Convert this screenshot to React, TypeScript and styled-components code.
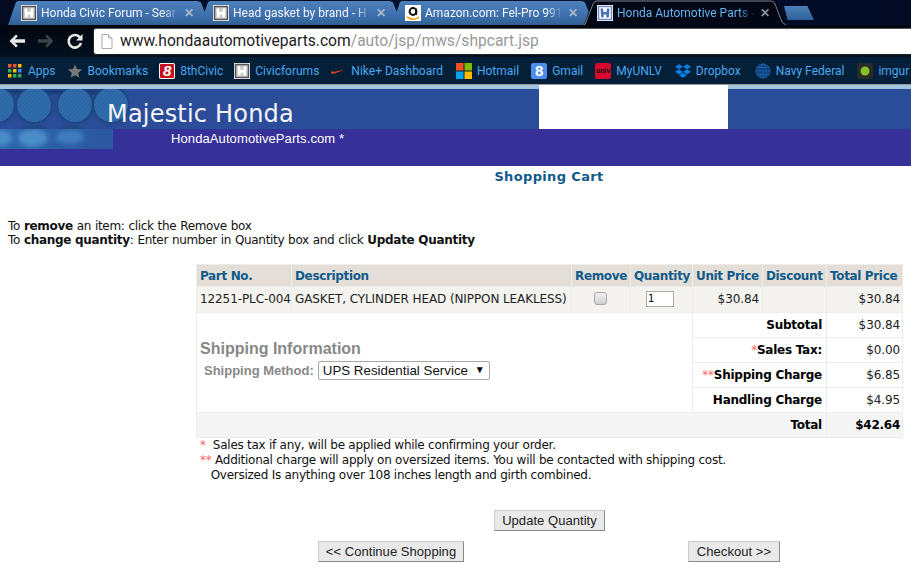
import React from "react";
import styled, { createGlobalStyle } from "styled-components";
import { FaDropbox } from "react-icons/fa";

const Global = createGlobalStyle`
  html, body { margin: 0; padding: 0; background: #fff; overflow: hidden; }
  #root { width: 911px; height: 578px; overflow: hidden; }
`;

const Page = styled.div`
  width: 911px;
  height: 578px;
  display: flex;
  flex-direction: column;
  font-family: "DejaVu Sans", Verdana, sans-serif;
  color: #111;
`;

/* ---- browser chrome ---- */
const Chrome = styled.div`
  height: 84px;
  background: linear-gradient(90deg, #020b22 0%, #03122e 60%, #020a24 100%);
  display: flex;
  flex-direction: column;
  font-family: Roboto, "Noto Sans", sans-serif;
`;
const TabStrip = styled.div`
  height: 25px;
  padding: 1px 0 0 8px;
  box-sizing: border-box;
  display: flex;
  align-items: stretch;
`;
const Tab = styled.div<{ $active?: boolean }>`
  width: 204px;
  margin-right: -12px;
  height: 24px;
  box-sizing: border-box;
  padding: 4px 0 0 13px;
  display: flex;
  gap: 4px;
  clip-path: polygon(0 100%, 8px 4%, 10px 0, calc(100% - 14px) 0, calc(100% - 11px) 6%, calc(100% - 2px) 100%);
  background: ${(p) => (p.$active ? "#020716" : "linear-gradient(#4d80bb, #3a6da9 70%, #30608f)")};
  position: relative;
  z-index: ${(p) => (p.$active ? 2 : 1)};
`;
const TabOutline = styled.svg`
  position: absolute;
  left: 584px;
  top: 0;
  z-index: 3;
`;
const TabTitle = styled.span<{ $active?: boolean }>`
  width: 138px;
  height: 17px;
  overflow: hidden;
  white-space: nowrap;
  font-size: 12px;
  line-height: 17px;
  color: ${(p) => (p.$active ? "#62b4f0" : "#f2f6fa")};
  -webkit-mask-image: linear-gradient(90deg, #000 88%, transparent 100%);
  mask-image: linear-gradient(90deg, #000 88%, transparent 100%);
`;
const TabClose = styled.span<{ $active?: boolean }>`
  margin-left: 1px;
  font-size: 12px;
  font-weight: 700;
  line-height: 17px;
  color: ${(p) => (p.$active ? "#8d9299" : "#a9b9cc")};
`;
const NewTab = styled.div`
  width: 30px;
  height: 14px;
  margin: 5px 0 0 8px;
  background: linear-gradient(#4d80bb, #2f5f97);
  clip-path: polygon(0 0, 78% 0, 100% 100%, 12% 100%);
`;
const Favicon = styled.span`
  width: 16px;
  height: 16px;
  flex: none;
  background: #fff;
  display: block;
  line-height: 0;
`;
const Toolbar = styled.div`
  height: 32px;
  display: flex;
  align-items: center;
  box-sizing: border-box;
  padding: 0 0 0 8px;
  background: linear-gradient(#01060f, #02101e);
`;
const NavIcon = styled.svg`
  flex: none;
  margin-right: 11px;
`;
const Omnibox = styled.div`
  flex: 1;
  height: 27px;
  margin-left: -2px;
  box-sizing: border-box;
  background: #fff;
  border: 1px solid #222;
  border-right: 0;
  border-top-color: #555;
  border-radius: 3px 0 0 3px;
  display: flex;
  align-items: center;
  padding-left: 7px;
  gap: 7px;
  font-size: 15.6px;
`;
const Url = styled.span`
  color: #999;
  white-space: nowrap;
  & b { color: #222; font-weight: 400; }
`;
const Bookmarks = styled.div`
  height: 27px;
  background: #041f38;
  display: flex;
  align-items: center;
  box-sizing: border-box;
  padding: 0 0 0 7px;
  font-size: 12px;
  white-space: nowrap;
  overflow: hidden;
`;
const Mark = styled.span<{ $gap?: number }>`
  display: flex;
  align-items: center;
  gap: 5px;
  color: #4aa8ee;
  margin-right: ${(p) => p.$gap ?? 12}px;
`;
const Glyph = styled.span<{ $bg: string; $fg?: string; $size?: number; $italic?: boolean; $ring?: boolean }>`
  width: 16px;
  height: 16px;
  flex: none;
  background: ${(p) => p.$bg};
  color: ${(p) => p.$fg ?? "#fff"};
  font: ${(p) => (p.$italic ? "italic" : "normal")} 700 ${(p) => p.$size ?? 13}px/16px "Liberation Sans", sans-serif;
  text-align: center;
  border-radius: 2px;
  overflow: hidden;
  ${(p) => (p.$ring ? "box-shadow: inset 0 0 0 1px #fff;" : "")}
`;

/* ---- site banner ---- */
const Banner = styled.div`
  position: relative;
  height: 82px;
  flex: none;
  display: flex;
  flex-direction: column;
`;
const BannerTop = styled.div`
  height: 45px;
  display: flex;
  border-top: 1px solid #999;
  box-sizing: border-box;
`;
const BannerBlue = styled.div<{ $w?: number }>`
  ${(p) => (p.$w ? `width:${p.$w}px;` : "flex:1;")}
  box-sizing: border-box;
  background: #2b4c99;
  border-top: 4px solid #a3c4de;
  padding-left: 107px;
`;
const BannerWhite = styled.div`
  width: 189px;
  background: #fff;
`;
const SiteName = styled.div`
  position: relative;
  z-index: 1;
  color: #f4f6fa;
  font-size: 24px;
  line-height: 28px;
  letter-spacing: 0.2px;
  margin-top: 11px;
  white-space: nowrap;
`;
const BannerBottom = styled.div`
  flex: 1;
  background: #363099;
  padding: 2px 0 0 171px;
  color: #fff;
  font: 13px/16px "Liberation Sans", Arial, sans-serif;
  letter-spacing: 0.1px;
  position: relative;
  z-index: 1;
`;
const BannerArt = styled.svg`
  position: absolute;
  left: 0;
  top: 5px;
  z-index: 0;
`;
const ArtLow = styled.svg`
  position: absolute;
  left: 0;
  top: 45px;
  z-index: 2;
`;

/* ---- content ---- */
const Title = styled.h1`
  margin: 3px 0 0;
  font-size: 13px;
  line-height: 16px;
  font-weight: 700;
  color: #0f5a8a;
  text-align: center;
  padding-left: 187px;
  letter-spacing: 0.35px;
`;
const Help = styled.div`
  margin: 34px 0 0 8px;
  font-size: 12px;
  line-height: 14px;
  letter-spacing: -0.32px;
  word-spacing: 0.4px;
  & b { letter-spacing: -0.3px; word-spacing: 0; }
`;
const Cart = styled.table`
  margin: 17px 0 0 196px;
  width: 706px;
  border-collapse: collapse;
  table-layout: fixed;
  font-size: 12px;
`;
const Th = styled.th`
  height: 21px;
  padding: 0 3px;
  background: #e3dfd8;
  color: #0f5a8a;
  font-size: 12px;
  font-weight: 700;
  text-align: left;
  border: 1px solid #efedea;
  white-space: nowrap;
  letter-spacing: -0.35px;
`;
const Td = styled.td<{ $align?: string; $bg?: string; $strong?: boolean; $lift?: boolean }>`
  height: ${(p) => (p.$lift ? 23 : 24)}px;
  padding: 0 ${(p) => (p.$strong ? 4 : 3)}px ${(p) => (p.$lift ? 2 : 0)}px 3px;
  background: ${(p) => p.$bg ?? "#fff"};
  text-align: ${(p) => p.$align ?? "left"};
  border: 1px solid #efedea;
  white-space: nowrap;
  color: ${(p) => (p.$strong ? "#000" : "#222")};
  font-weight: ${(p) => (p.$strong ? 700 : 400)};
  font-size: 12px;
  letter-spacing: ${(p) => (p.$strong ? "-0.25px" : "-0.1px")};
  &:last-child { padding-right: 2px; }
`;
const ShipCell = styled.td`
  padding: 26px 0 0 3px;
  vertical-align: top;
  border: 1px solid #efedea;
  font-family: "Liberation Sans", Arial, sans-serif;
`;
const ShipTitle = styled.div`
  font-size: 16px;
  line-height: 20px;
  font-weight: 700;
  color: #888;
`;
const ShipRow = styled.div`
  display: flex;
  align-items: center;
  gap: 4px;
  margin: 2px 0 0 4px;
  font-size: 13px;
  font-weight: 700;
  color: #888;
`;
const SelectWrap = styled.span`
  position: relative;
  display: block;
  line-height: 0;
`;
const Select = styled.select`
  appearance: none;
  width: 172px;
  height: 19px;
  padding: 0 0 0 4px;
  box-sizing: border-box;
  background: #fff;
  border: 1px solid #a9a9a9;
  border-radius: 2px;
  color: #111;
  font: 13.33px "Liberation Sans", Arial, sans-serif;
`;
const Arrow = styled.span`
  position: absolute;
  right: 5px;
  top: 4px;
  font-size: 10px;
  line-height: 10px;
  color: #000;
  pointer-events: none;
`;
const Check = styled.input`
  appearance: none;
  display: block;
  margin: 0 0 0 19px;
  width: 13px;
  height: 13px;
  border: 1px solid #a9a9a9;
  border-radius: 3px;
  background: linear-gradient(#f2f2f2, #d0d0d0);
`;
const Qty = styled.input`
  display: block;
  margin: 0 0 0 12px;
  width: 28px;
  height: 16px;
  box-sizing: border-box;
  padding: 0 0 0 1px;
  border: 1px solid #aaa;
  font: 10px "DejaVu Sans Mono", monospace;
  color: #000;
`;
const Star = styled.span`
  color: #f66;
  font-weight: 400;
`;
const Notes = styled.div`
  margin: 0 0 0 200px;
  font-size: 12px;
  line-height: 15px;
  letter-spacing: -0.26px;
  white-space: pre;
`;
const Actions = styled.div`
  margin-top: 27px;
  display: flex;
  flex-direction: column;
  gap: 10px;
  font-family: "Liberation Sans", Arial, sans-serif;
`;
const ActionRow = styled.div<{ $pad: number; $gap?: number }>`
  display: flex;
  padding-left: ${(p) => p.$pad}px;
  gap: ${(p) => p.$gap ?? 0}px;
`;
const Button = styled.button<{ $w: number }>`
  width: ${(p) => p.$w}px;
  height: 21px;
  padding: 0;
  box-sizing: border-box;
  background: #e9e9e9;
  border: 1px solid;
  border-color: #ccc #888 #888 #ccc;
  color: #222;
  font: 13px/18px "Liberation Sans", Arial, sans-serif;
  letter-spacing: 0.05px;
`;

const Honda = ({ blue }: { blue?: boolean }) => (
  <Favicon>
    <svg width="16" height="16" viewBox="0 0 16 16">
      <rect x="1.500" y="1.500" width="13" height="13" fill={blue ? "#fff" : "#c9c9c9"} stroke={blue ? "#6f8fc4" : "#555"} strokeWidth="1.500" />
      <path d="M3.500 3.500h2.500l.5 3.500h3l.5-3.500h2.500l-.7 9h-2.300l-.3-3h-2.400l-.3 3H4.200z" fill={blue ? "#4f75b4" : "#fff"} />
    </svg>
  </Favicon>
);

const tabs = ["Honda Civic Forum - Sear", "Head gasket by brand - H", "Amazon.com: Fel-Pro 991", "Honda Automotive Parts -"];

const App = () => (
  <Page>
    <Global />
    <Chrome>
      <TabStrip>
        {tabs.map((t, i) => (
          <Tab key={t} $active={i === 3}>
            {i === 2 ? (
              <Favicon>
                <svg width="16" height="16" viewBox="0 0 16 16">
                  <rect width="16" height="16" rx="2" fill="#fff" />
                  <circle cx="8" cy="6.500" r="3.400" fill="none" stroke="#111" strokeWidth="2" />
                  <path d="M11 3.500v6.500" stroke="#111" strokeWidth="2" />
                  <path d="M2 12c4 3 9 3 12 0" fill="none" stroke="#f90" strokeWidth="1.600" />
                </svg>
              </Favicon>
            ) : (
              <Honda blue={i === 3} />
            )}
            <TabTitle $active={i === 3}>{t}</TabTitle>
            <TabClose $active={i === 3}>✕</TabClose>
          </Tab>
        ))}
        <NewTab />
      </TabStrip>
      <TabOutline width="204" height="25" viewBox="0 0 204 25">
        <path d="M0 24.500h1L9 4q1-3 4-3h174q3 0 4 3l7 18q1 2 4 2.500" fill="none" stroke="#7a7d80" strokeWidth="1" />
      </TabOutline>
      <Toolbar>
        <NavIcon width="18" height="18" viewBox="0 0 18 18">
          <path d="M1.500 9l6.500-6.500 1.800 1.800-3 3H17v3.400H6.800l3 3L8 15.500z" fill="#e8e8e8" />
        </NavIcon>
        <NavIcon width="18" height="18" viewBox="0 0 18 18">
          <path d="M16.500 9L10 2.500 8.200 4.300l3 3H1v3.400h10.200l-3 3L10 15.500z" fill="#3d4348" />
        </NavIcon>
        <NavIcon width="18" height="18" viewBox="0 0 18 18">
          <path d="M14 5.500A6.300 6.300 0 1 0 15 11" fill="none" stroke="#e8e8e8" strokeWidth="2.600" />
          <path d="M16.500 2v6.500H10z" fill="#e8e8e8" />
        </NavIcon>
        <Omnibox>
          <svg width="12" height="15" viewBox="0 0 12 15">
            <path d="M1 .5h6.500L11 4v10.500H1z" fill="#fff" stroke="#aaa" />
            <path d="M7.500.5V4H11" fill="#eee" stroke="#aaa" />
          </svg>
          <Url>
            <b>www.hondaautomotiveparts.com</b>/auto/jsp/mws/shpcart.jsp
          </Url>
        </Omnibox>
      </Toolbar>
      <Bookmarks>
        <Mark $gap={11}>
          <svg width="16" height="16" viewBox="0 0 16 16">
            {[0, 1, 2].flatMap((r) =>
              [0, 1, 2].map((c) => (
                <rect key={`${r}${c}`} x={1 + c * 5} y={1 + r * 5} width="3.500" height="3.500"
                  fill={["#e53", "#e53", "#fb0", "#3a5", "#fb0", "#48e", "#fb0", "#3a5", "#3a5"][r * 3 + c]} />
              ))
            )}
          </svg>
          Apps
        </Mark>
        <Mark $gap={11}>
          <svg width="16" height="16" viewBox="0 0 16 16">
            <path d="M8 1.500l2 4.600 5 .5-3.800 3.300 1.200 4.900L8 12.200l-4.400 2.600 1.200-4.900L1 6.600l5-.5z" fill="#777" />
          </svg>
          Bookmarks
        </Mark>
        <Mark $gap={11}>
          <Glyph $bg="#c8101c" $italic $ring $size={15}>8</Glyph>
          8thCivic
        </Mark>
        <Mark $gap={11}>
          <Honda />
          Civicforums
        </Mark>
        <Mark $gap={13}>
          <svg width="16" height="16" viewBox="0 0 16 16">
            <path d="M1 9.500c0 1.500 2 1.500 3.500 1L15 6.500 5.500 8.500c-2 .5-3 .3-3-.5z" fill="#e2421c" />
          </svg>
          Nike+ Dashboard
        </Mark>
        <Mark>
          <svg width="16" height="16" viewBox="0 0 16 16">
            <rect width="7.500" height="7.500" fill="#f25022" />
            <rect x="8.500" width="7.500" height="7.500" fill="#7fba00" />
            <rect y="8.500" width="7.500" height="7.500" fill="#00a4ef" />
            <rect x="8.500" y="8.500" width="7.500" height="7.500" fill="#ffb900" />
          </svg>
          Hotmail
        </Mark>
        <Mark>
          <Glyph $bg="#4f8cf0" $size={15}>8</Glyph>
          Gmail
        </Mark>
        <Mark $gap={13}>
          <Glyph $bg="#d8092e" $fg="#111" $size={7}>unlv</Glyph>
          MyUNLV
        </Mark>
        <Mark $gap={14}>
          <FaDropbox size={16} color="#0a7ee0" />
          Dropbox
        </Mark>
        <Mark $gap={13}>
          <svg width="16" height="16" viewBox="0 0 16 16" fill="none" stroke="#1a5fa8" strokeWidth="1">
            <circle cx="8" cy="8" r="7" fill="#0c3a70" />
            <ellipse cx="8" cy="8" rx="3.200" ry="7" />
            <path d="M1 8h14M2 4.500h12M2 11.500h12M8 1v14" />
          </svg>
          Navy Federal
        </Mark>
        <Mark>
          <Glyph $bg="#2a2a2a">
            <svg width="16" height="16" viewBox="0 0 16 16" style={{ display: "block" }}>
              <circle cx="8" cy="8" r="4.500" fill="#85bf25" />
            </svg>
          </Glyph>
          imgur
        </Mark>
      </Bookmarks>
    </Chrome>

    <Banner>
      <BannerArt width="130" height="40" viewBox="0 0 130 40">
        <defs>
          <pattern id="hatch" width="3" height="3" patternUnits="userSpaceOnUse" patternTransform="rotate(45)">
            <rect width="3" height="3" fill="#2c66a4" />
            <rect width="1" height="3" fill="#326fae" />
          </pattern>
          <filter id="halo"><feGaussianBlur stdDeviation="1.500" /></filter>
        </defs>
        <rect y="0" width="122" height="5" fill="#163a72" filter="url(#halo)" />
        {[-3, 34, 75, 111].map((x) => (
          <g key={x}>
            <circle cx={x} cy="16" r="19" fill="#1b457f" filter="url(#halo)" />
            <circle cx={x} cy="16" r="17" fill="url(#hatch)" />
          </g>
        ))}
        <ellipse cx="34" cy="41" rx="14" ry="5" fill="#1f4a85" />
        <ellipse cx="72" cy="41" rx="13" ry="5" fill="#1f4a85" />
      </BannerArt>
      <BannerTop>
        <BannerBlue $w={539}>
          <SiteName>Majestic Honda</SiteName>
        </BannerBlue>
        <BannerWhite />
        <BannerBlue />
      </BannerTop>
      <BannerBottom>HondaAutomotiveParts.com *</BannerBottom>
      <ArtLow width="113" height="20" viewBox="0 0 113 20">
        <defs>
          <linearGradient id="lowFade" x1="0" x2="1" y1="0" y2="0">
            <stop offset="0" stopColor="#2a66ac" />
            <stop offset="1" stopColor="#2c56a0" />
          </linearGradient>
          <filter id="soft"><feGaussianBlur stdDeviation="2.500" /></filter>
        </defs>
        <rect width="113" height="20" fill="url(#lowFade)" />
        <g filter="url(#soft)">
          <ellipse cx="0" cy="9" rx="12" ry="8" fill="#4c8dc9" />
          <ellipse cx="33" cy="9" rx="15" ry="9" fill="#4c8dc9" />
          <ellipse cx="70" cy="8" rx="14" ry="7" fill="#3f7dbd" />
        </g>
      </ArtLow>
    </Banner>

    <Title>Shopping Cart</Title>
    <Help>
      <div>To <b>remove</b> an item: click the Remove box</div>
      <div>To <b>change quantity</b>: Enter number in Quantity box and click <b>Update Quantity</b></div>
    </Help>

    <Cart>
      <colgroup>
        <col style={{ width: 95 }} />
        <col style={{ width: 280 }} />
        <col style={{ width: 59 }} />
        <col style={{ width: 62 }} />
        <col style={{ width: 70 }} />
        <col style={{ width: 64 }} />
        <col style={{ width: 76 }} />
      </colgroup>
      <thead>
        <tr>
          <Th>Part No.</Th>
          <Th>Description</Th>
          <Th>Remove</Th>
          <Th>Quantity</Th>
          <Th>Unit Price</Th>
          <Th>Discount</Th>
          <Th>Total Price</Th>
        </tr>
      </thead>
      <tbody>
        <tr>
          <Td $bg="#f4f3f0" $lift>12251-PLC-004</Td>
          <Td $bg="#f4f3f0" $lift>GASKET, CYLINDER HEAD (NIPPON LEAKLESS)</Td>
          <Td $bg="#f4f3f0" $lift><Check type="checkbox" readOnly /></Td>
          <Td $bg="#f4f3f0" $lift><Qty defaultValue="1" /></Td>
          <Td $bg="#f4f3f0" $lift $align="right">$30.84</Td>
          <Td $bg="#f4f3f0" $lift />
          <Td $bg="#f4f3f0" $lift $align="right">$30.84</Td>
        </tr>
        <tr>
          <ShipCell colSpan={4} rowSpan={4}>
            <ShipTitle>Shipping Information</ShipTitle>
            <ShipRow>
              Shipping Method:
              <SelectWrap>
                <Select defaultValue="ups">
                  <option value="ups">UPS Residential Service</option>
                </Select>
                <Arrow>▼</Arrow>
              </SelectWrap>
            </ShipRow>
          </ShipCell>
          <Td colSpan={2} $align="right" $strong>Subtotal</Td>
          <Td $align="right">$30.84</Td>
        </tr>
        <tr>
          <Td colSpan={2} $align="right" $strong><Star>*</Star>Sales Tax:</Td>
          <Td $align="right">$0.00</Td>
        </tr>
        <tr>
          <Td colSpan={2} $align="right" $strong><Star>**</Star>Shipping Charge</Td>
          <Td $align="right">$6.85</Td>
        </tr>
        <tr>
          <Td colSpan={2} $align="right" $strong>Handling Charge</Td>
          <Td $align="right">$4.95</Td>
        </tr>
        <tr>
          <Td colSpan={6} $align="right" $bg="#f5f5f5" $strong>Total</Td>
          <Td $align="right" $bg="#f5f5f5" $strong>$42.64</Td>
        </tr>
      </tbody>
    </Cart>

    <Notes>
      <div><Star>*</Star>{"  Sales tax if any, will be applied while confirming your order."}</div>
      <div><Star>**</Star>{" Additional charge will apply on oversized items. You will be contacted with shipping cost."}</div>
      <div>{"   Oversized Is anything over 108 inches length and girth combined."}</div>
    </Notes>

    <Actions>
      <ActionRow $pad={494}>
        <Button $w={111}>Update Quantity</Button>
      </ActionRow>
      <ActionRow $pad={318} $gap={224}>
        <Button $w={146}>{"<< Continue Shopping"}</Button>
        <Button $w={92}>{"Checkout >>"}</Button>
      </ActionRow>
    </Actions>
  </Page>
);

export default App;
